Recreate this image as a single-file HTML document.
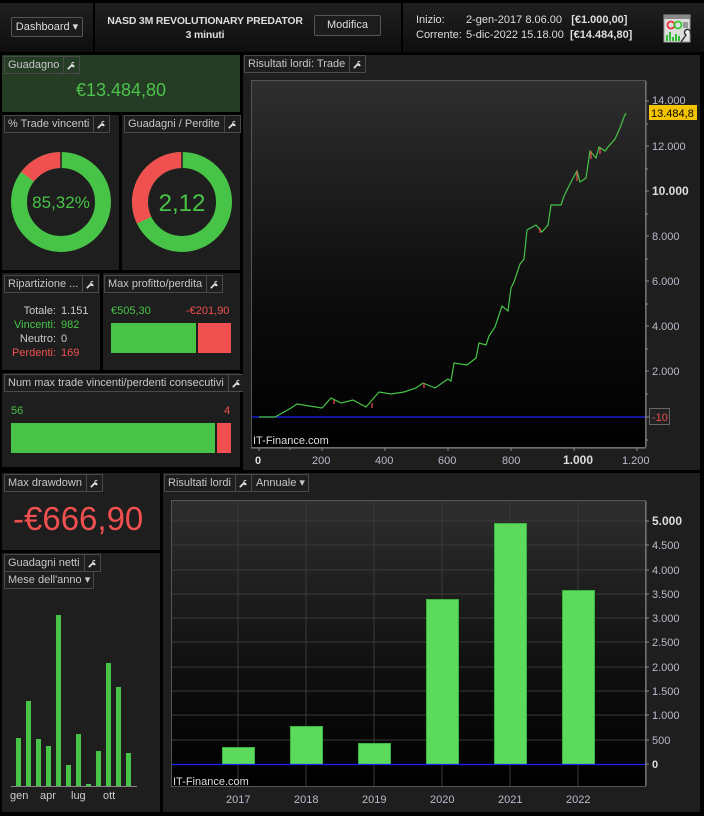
<!DOCTYPE html>
<html><head><meta charset="utf-8"><style>
*{margin:0;padding:0;box-sizing:border-box}
body{width:704px;height:816px;background:#000;font-family:"Liberation Sans",sans-serif;position:relative;overflow:hidden;color:#ccc;font-size:11px}
.a{position:absolute}
.p{position:absolute;background:#1e1e1e}
.t{position:absolute;height:18px;border:1px solid #4a4a4a;background:#1e1e1e;color:#c8c8c8;font-size:11px;line-height:16px;padding:0 3px;white-space:nowrap;display:flex}
.t .w{border-left:1px solid #4a4a4a;width:16px;margin-left:4px;margin-right:-3px;display:flex;align-items:center;justify-content:center}
.btn{position:absolute;border:1px solid #555;border-radius:2px;background:#1c1c1c;color:#ddd;font-size:11px;text-align:center}
</style></head><body>
<svg width="0" height="0" style="position:absolute"><defs><symbol id="wr" viewBox="0 0 10 10"><path d="M1.5 8.5 L5.5 4.5" stroke="#ddd" stroke-width="2" stroke-linecap="round"/><path d="M4.6 3.6 A2.6 2.6 0 0 0 8.6 6.4 L7.5 4 Z M4.6 3.6 A2.6 2.6 0 0 1 8.6 1.4 L6.2 2.6 Z" fill="#ddd"/></symbol></defs></svg>

<!-- header -->
<div class="a" style="left:0;top:3px;width:704px;height:49px;background:linear-gradient(#202020,#0e0e0e)"></div>
<div class="a" style="left:93px;top:3px;width:2px;height:49px;background:#000"></div>
<div class="a" style="left:401px;top:3px;width:2px;height:49px;background:#000"></div>
<div class="btn" style="left:11px;top:17px;width:72px;height:20px;line-height:18px">Dashboard ▾</div>
<div class="a" style="left:96px;top:14px;width:218px;text-align:center;font-weight:bold;color:#ddd;line-height:14px;white-space:nowrap;font-size:10.5px;letter-spacing:-0.2px">NASD 3M REVOLUTIONARY PREDATOR<br>3 minuti</div>
<div class="btn" style="left:314px;top:15px;width:67px;height:21px;line-height:19px">Modifica</div>
<div class="a" style="left:416px;top:13px;color:#ddd;line-height:15px">Inizio:<br>Corrente:</div>
<div class="a" style="left:466px;top:13px;color:#ddd;line-height:15px;white-space:nowrap">2-gen-2017 8.06.00 &nbsp;&nbsp;<b>[€1.000,00]</b><br>5-dic-2022 15.18.00 &nbsp;<b>[€14.484,80]</b></div>
<svg class="a" style="left:663px;top:14px" width="30" height="30" viewBox="0 0 30 30"><rect x="1" y="1" width="26" height="27" fill="#ddd" stroke="#999"/><rect x="1" y="1" width="26" height="4" fill="#888"/><circle cx="8" cy="11" r="3.5" fill="none" stroke="#e33" stroke-width="1.8"/><circle cx="15" cy="11" r="3.5" fill="none" stroke="#3c3" stroke-width="1.8"/><path d="M20 9h5M20 11h5M20 13h5" stroke="#555"/><path d="M4 27v-6M7 27v-9M10 27v-4M13 27v-7M16 27v-5" stroke="#3b3" stroke-width="2"/><path d="M18 28 L23 21 a3 3 0 1 1 4 -1" stroke="#333" stroke-width="1.5" fill="#eee"/></svg>

<!-- Guadagno -->
<div class="p" style="left:2px;top:55px;width:238px;height:57px;background:#253c25"></div>
<div class="t" style="left:4px;top:56px;background:#253c25">Guadagno<span class="w"><svg width="9" height="9"><use href="#wr"/></svg></span></div>
<div class="a" style="left:2px;top:80px;width:238px;text-align:center;color:#4cc24c;font-size:18px">€13.484,80</div>

<!-- donuts -->
<div class="p" style="left:2px;top:115px;width:117px;height:155px"></div>
<div class="p" style="left:122px;top:115px;width:118px;height:155px"></div>
<div class="t" style="left:4px;top:115px">% Trade vincenti<span class="w"><svg width="9" height="9"><use href="#wr"/></svg></span></div>
<div class="t" style="left:124px;top:115px">Guadagni / Perdite<span class="w"><svg width="9" height="9"><use href="#wr"/></svg></span></div>
<svg class="a" style="left:10px;top:151px" width="102" height="102" viewBox="-51 -51 102 102">
<circle r="42" fill="none" stroke="#47c447" stroke-width="16"/>
<circle r="42" fill="none" stroke="#f05050" stroke-width="16" stroke-dasharray="38.8 300" transform="rotate(-143)"/>
<path d="M0 -51V-33" stroke="#1e1e1e" stroke-width="1.5"/>
<text y="6" text-anchor="middle" fill="#47c447" font-size="17" font-family="Liberation Sans">85,32%</text></svg>
<svg class="a" style="left:131px;top:151px" width="102" height="102" viewBox="-51 -51 102 102">
<circle r="42" fill="none" stroke="#47c447" stroke-width="16"/>
<circle r="42" fill="none" stroke="#f05050" stroke-width="16" stroke-dasharray="84.7 300" transform="rotate(-205.6)"/>
<path d="M0 -51V-33" stroke="#1e1e1e" stroke-width="1.5"/>
<text y="9" text-anchor="middle" fill="#47c447" font-size="24" font-family="Liberation Sans">2,12</text></svg>

<!-- Ripartizione -->
<div class="p" style="left:2px;top:273px;width:98px;height:97px"></div>
<div class="p" style="left:103px;top:273px;width:137px;height:97px"></div>
<div class="t" style="left:4px;top:275px;width:95px">Ripartizione ...<span class="w" style="margin-left:auto"><svg width="9" height="9"><use href="#wr"/></svg></span></div>
<div class="a" style="left:0;top:304px;width:56px;text-align:right;line-height:14px"><span style="color:#ccc">Totale:</span><br><span style="color:#47c447">Vincenti:</span><br>Neutro:<br><span style="color:#f05050">Perdenti:</span></div>
<div class="a" style="left:61px;top:304px;line-height:14px">1.151<br><span style="color:#47c447">982</span><br>0<br><span style="color:#f05050">169</span></div>
<div class="t" style="left:104px;top:275px">Max profitto/perdita<span class="w"><svg width="9" height="9"><use href="#wr"/></svg></span></div>
<div class="a" style="left:111px;top:305px;color:#47c447">€505,30</div>
<div class="a" style="left:186px;top:305px;color:#f05050">-€201,90</div>
<div class="a" style="left:111px;top:323px;width:85px;height:30px;background:#47c447"></div>
<div class="a" style="left:198px;top:323px;width:33px;height:30px;background:#f05050"></div>

<!-- Num max -->
<div class="p" style="left:2px;top:373px;width:238px;height:94px"></div>
<div class="t" style="left:4px;top:374px">Num max trade vincenti/perdenti consecutivi<span class="w"><svg width="9" height="9"><use href="#wr"/></svg></span></div>
<div class="a" style="left:11px;top:405px;color:#47c447">56</div>
<div class="a" style="left:224px;top:405px;color:#f05050">4</div>
<div class="a" style="left:11px;top:423px;width:204px;height:30px;background:#47c447"></div>
<div class="a" style="left:217px;top:423px;width:14px;height:30px;background:#f05050"></div>

<!-- big chart -->
<div class="p" style="left:243px;top:55px;width:457px;height:415px"></div>
<div class="t" style="left:244px;top:55px">Risultati lordi: Trade<span class="w"><svg width="9" height="9"><use href="#wr"/></svg></span></div>
<svg class="a" style="left:243px;top:55px" width="461" height="415" viewBox="243 55 461 415" font-family="Liberation Sans" font-size="11">
<defs><linearGradient id="g1" x1="0" y1="0" x2="0" y2="1"><stop offset="0" stop-color="#2e2e2e"/><stop offset="0.6" stop-color="#0c0c0c"/><stop offset="1" stop-color="#000"/></linearGradient></defs>
<rect x="251.5" y="80.5" width="394" height="367" fill="url(#g1)" stroke="#555"/>
<line x1="252" y1="417" x2="645" y2="417" stroke="#2020ff" stroke-width="1.3"/>
<polyline fill="none" stroke="#47c447" stroke-width="1.2" points="259,417 275,417 291,408 297,404 322,408 331,398 341,403 353,400 366,407 379,392 391,394 404,392 416,388 423,383 435,388 448,379 451,381 454,363 467,365 476,358 479,343 486,345 489,336 495,327 502,306 508,311 511,288 514,282 520,264 524,259 527,230 536,225 542,232 548,225 551,205 561,205 564,196 571,182 577,171 580,182 586,178 590,151 596,158 599,147 605,151 608,147 615,139 620,128 624,117 626,113"/>
<g stroke="#f05050" stroke-width="1.2"><path d="M334 400v4M372 403v5M424 383v5M540 228v5M577 171v10M591 151v8M600 148v6"/></g>
<text x="253" y="444" fill="#ddd" font-size="11">IT-Finance.com</text>
<g stroke="#888"><path d="M646 81v366M645 101h4M645 124h3M645 146h4M645 169h3M645 191h4M645 214h3M645 236h4M645 259h3M645 281h4M645 304h3M645 326h4M645 349h3M645 371h4M645 394h3M645 417h4M645 440h3M251 448h395M259 448v3M290 448v2M322 448v3M385 448v3M448 448v3M511 448v3M574 448v3M637 448v3"/></g>
<g fill="#bbc" font-size="11"><text x="652" y="104">14.000</text><text x="652" y="150">12.000</text><text x="652" y="195" font-weight="bold" font-size="12" fill="#ddd">10.000</text><text x="652" y="240">8.000</text><text x="652" y="285">6.000</text><text x="652" y="330">4.000</text><text x="652" y="375">2.000</text>
<text x="255" y="464" fill="#ddd" font-weight="bold">0</text><text x="312" y="464">200</text><text x="375" y="464">400</text><text x="438" y="464">600</text><text x="502" y="464">800</text><text x="563" y="464" font-weight="bold" font-size="12" fill="#ddd">1.000</text><text x="622" y="464">1.200</text></g>
<rect x="649" y="105" width="48" height="15" fill="#f5c400"/><text x="651" y="117" fill="#000">13.484,8</text>
<rect x="649.5" y="408.5" width="20" height="16" fill="#222" stroke="#666"/><text x="652" y="421" fill="#f05050">-10</text>
</svg>

<!-- Max drawdown -->
<div class="p" style="left:2px;top:473px;width:158px;height:77px"></div>
<div class="t" style="left:4px;top:474px">Max drawdown<span class="w"><svg width="9" height="9"><use href="#wr"/></svg></span></div>
<div class="a" style="left:13px;top:500px;color:#f05050;font-size:33px">-€666,90</div>

<!-- Guadagni netti -->
<div class="p" style="left:2px;top:553px;width:158px;height:259px"></div>
<div class="t" style="left:4px;top:554px">Guadagni netti<span class="w"><svg width="9" height="9"><use href="#wr"/></svg></span></div>
<div class="t" style="left:4px;top:571px">Mese dell'anno ▾</div>
<svg class="a" style="left:0;top:600px" width="160" height="212" viewBox="0 600 160 212" font-family="Liberation Sans" font-size="11">
<g fill="#47c447"><rect x="16" y="738" width="5" height="48"/><rect x="26" y="701" width="5" height="85"/><rect x="36" y="739" width="5" height="47"/><rect x="46" y="746" width="5" height="40"/><rect x="56" y="615" width="5" height="171"/><rect x="66" y="765" width="5" height="21"/><rect x="76" y="734" width="5" height="52"/><rect x="86" y="784" width="5" height="2"/><rect x="96" y="751" width="5" height="35"/><rect x="106" y="663" width="5" height="123"/><rect x="116" y="687" width="5" height="99"/><rect x="126" y="753" width="5" height="33"/></g>
<line x1="11" y1="786.5" x2="137" y2="786.5" stroke="#888"/>
<g fill="#ccc"><text x="10" y="799">gen</text><text x="40" y="799">apr</text><text x="71" y="799">lug</text><text x="103" y="799">ott</text></g>
</svg>

<!-- annual -->
<div class="p" style="left:163px;top:473px;width:537px;height:339px"></div>
<div class="t" style="left:164px;top:474px">Risultati lordi<span class="w" style="margin-right:0"><svg width="9" height="9"><use href="#wr"/></svg></span><span style="border-left:1px solid #4a4a4a;padding-left:4px">Annuale ▾</span></div>
<svg class="a" style="left:163px;top:490px" width="541" height="322" viewBox="163 490 541 322" font-family="Liberation Sans" font-size="11">
<defs><linearGradient id="g2" x1="0" y1="0" x2="0" y2="1"><stop offset="0" stop-color="#2e2e2e"/><stop offset="0.7" stop-color="#0a0a0a"/><stop offset="1" stop-color="#000"/></linearGradient></defs>
<rect x="171.5" y="500.5" width="474" height="286" fill="url(#g2)" stroke="#555"/>
<g stroke="#3a3a3a"><path d="M172 521h473M172 545h473M172 570h473M172 594h473M172 618h473M172 642h473M172 667h473M172 691h473M172 715h473M172 740h473M238 501v285M306 501v285M374 501v285M442 501v285M510 501v285M578 501v285"/></g>
<g fill="#5cda5c" stroke="#3bb53b"><rect x="222.5" y="747.5" width="32" height="17"/><rect x="290.5" y="726.5" width="32" height="38"/><rect x="358.5" y="743.5" width="32" height="21"/><rect x="426.5" y="599.5" width="32" height="165"/><rect x="494.5" y="523.5" width="32" height="241"/><rect x="562.5" y="590.5" width="32" height="174"/></g>
<line x1="172" y1="764.5" x2="645" y2="764.5" stroke="#2020ff" stroke-width="1.3"/>
<text x="173" y="785" fill="#ddd">IT-Finance.com</text>
<g stroke="#888"><path d="M646 501v285M645 521h4M645 545h4M645 570h4M645 594h4M645 618h4M645 642h4M645 667h4M645 691h4M645 715h4M645 740h4M645 764h4"/></g>
<g fill="#bbc"><text x="652" y="525" font-weight="bold" font-size="12" fill="#ddd">5.000</text><text x="652" y="549">4.500</text><text x="652" y="574">4.000</text><text x="652" y="598">3.500</text><text x="652" y="622">3.000</text><text x="652" y="646">2.500</text><text x="652" y="671">2.000</text><text x="652" y="695">1.500</text><text x="652" y="719">1.000</text><text x="652" y="744">500</text><text x="652" y="768" fill="#ddd" font-weight="bold">0</text>
<text x="226" y="803">2017</text><text x="294" y="803">2018</text><text x="362" y="803">2019</text><text x="430" y="803">2020</text><text x="498" y="803">2021</text><text x="566" y="803">2022</text></g>
</svg>
</body></html>
